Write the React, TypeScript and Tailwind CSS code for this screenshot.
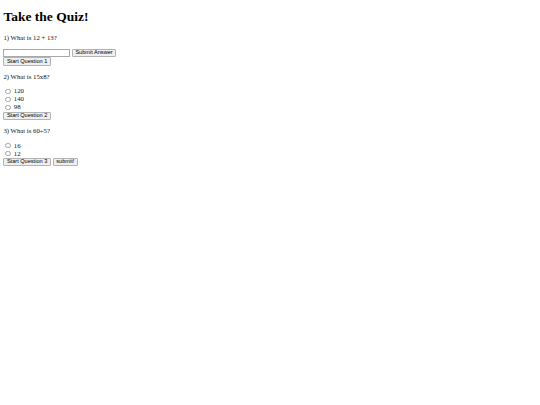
import type { ReactNode } from "react";

interface Question {
  id: number;
  prompt: string;
  options?: string[];
  hasInput?: boolean;
  finalSubmit?: boolean;
}

const questions: Question[] = [
  { id: 1, prompt: "1) What is 12 + 13?", hasInput: true },
  { id: 2, prompt: "2) What is 15x8?", options: ["120", "140", "98"] },
  { id: 3, prompt: "3) What is 60÷5?", options: ["16", "12"], finalSubmit: true },
];

const Button = ({ children }: { children: ReactNode }) => (
  <button
    type="button"
    className="flex items-center h-[8.6px] px-[2.5px] bg-[#efefef] border border-[#b3b3b3] rounded-[1px]
               font-['Liberation_Sans',Arial,sans-serif] text-[5.6px] leading-none text-black"
  >
    {children}
  </button>
);

export default function App() {
  return (
    <div className="mx-[3.375px] font-['Liberation_Serif','Times_New_Roman',serif] text-[6.75px] leading-[normal] text-[#111]">
      <h1 className="text-[13.5px] font-bold my-[9.05px] text-black">Take the Quiz!</h1>

      {questions.map((q) => (
        <div key={q.id}>
          <p className="mt-[6.75px] mb-[7.5px]">{q.prompt}</p>

          {q.hasInput && (
            <div className="flex items-start gap-[2px] h-[8.5px]">
              <input
                type="text"
                className="w-[66.5px] h-[8px] bg-white border border-[#a9a9a9] outline-none"
              />
              <Button>Submit Answer</Button>
            </div>
          )}

          {q.options?.map((opt) => (
            <div key={opt} className="flex items-start h-[8px]">
              <input
                type="radio"
                name={`q${q.id}`}
                className="appearance-none w-[5.4px] h-[5.4px] mt-[1.3px] ml-[2.1px] rounded-full border border-[#a3a3a3] bg-white"
              />
              <span className="ml-[3px]">{opt}</span>
            </div>
          ))}

          <div className="flex items-center gap-[2px] h-[9px]">
            <Button>Start Question {q.id}</Button>
            {q.finalSubmit && <Button>submit!</Button>}
          </div>
        </div>
      ))}
    </div>
  );
}
